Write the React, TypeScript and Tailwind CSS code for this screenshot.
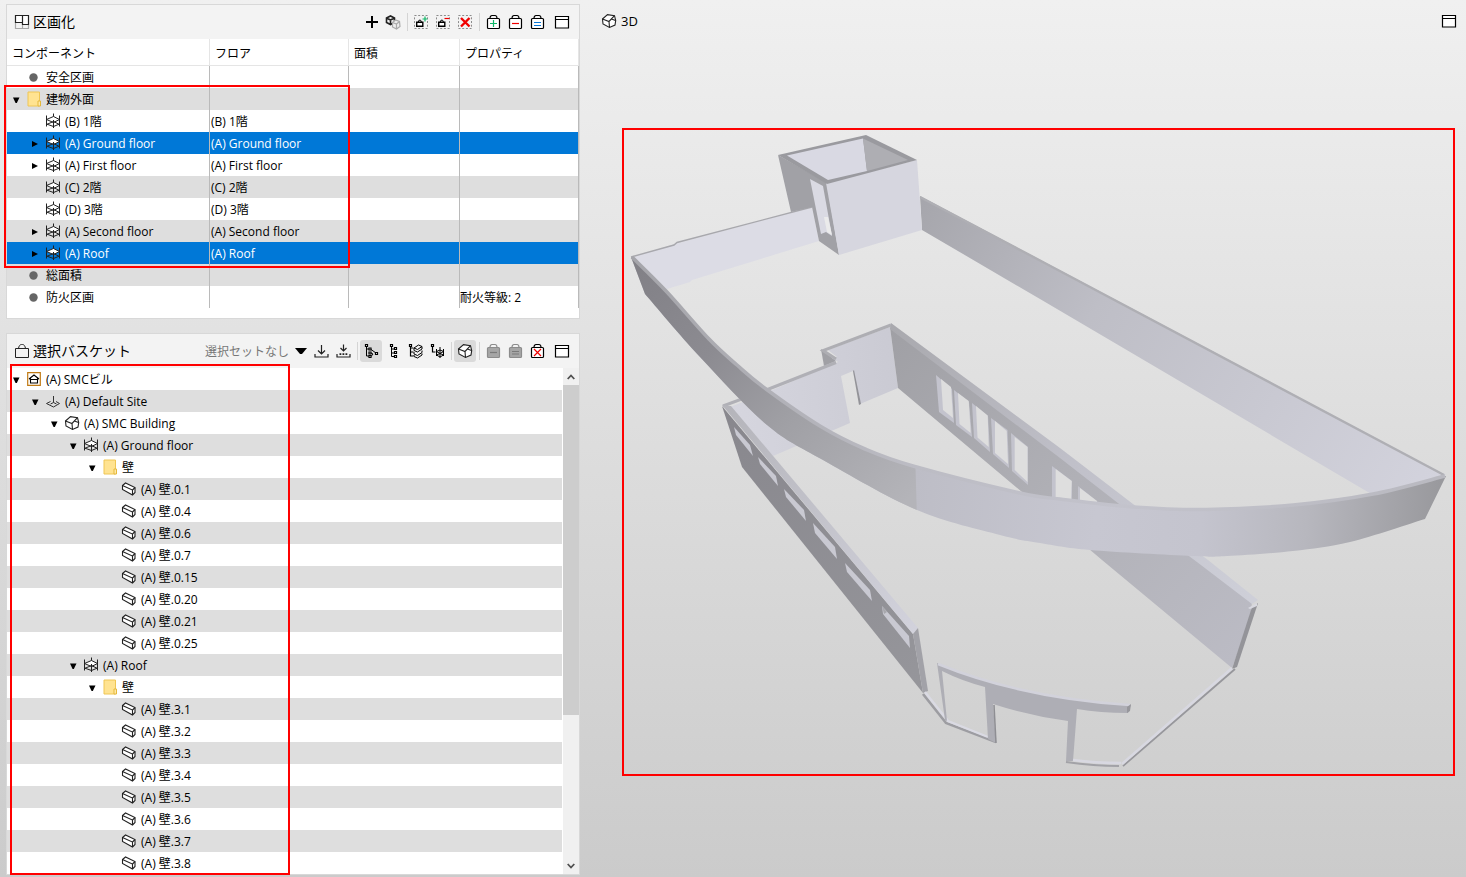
import type { ReactNode } from "react";

type Pt = [number, number];

/* ---------- icons ---------- */

function Icon({ children, stroke = "#000", width = 1.2 }: { children: ReactNode; stroke?: string; width?: number }) {
  return (
    <svg viewBox="0 0 16 16" className="h-4 w-4 shrink-0" fill="none" stroke={stroke} strokeWidth={width} aria-hidden="true">
      {children}
    </svg>
  );
}

const PartitionIcon = () => (
  <Icon>
    <path d="M1.5 8v6.5h6.5M8 14.5h6.5V10.5" stroke="#a8a8a8" />
    <path d="M8.5 8v6.5" stroke="#a8a8a8" />
    <path d="M1.5 1.5h7v7h-7zM8.5 1.5h6v9h-6z" fill="#fff" stroke="#222" />
  </Icon>
);
const PlusIcon = () => (
  <Icon>
    <path d="M9 2v12M3 8h12" strokeWidth="2" />
  </Icon>
);
const CubesIcon = () => (
  <Icon>
    <path d="M1.500 4l4-2 4 2v4.500l-4 2-4-2zM1.500 4l4 2 4-2M5.500 6v4.500" strokeWidth="1.6" stroke="#222" />
    <path d="M7.500 8.500l3-2.500 4 1.500.5 5-3.500 2.500-4-2z" fill="#eee" stroke="#aaa" />
    <path d="M7.500 8.500l4 1.500 3-2.500M11.500 10v5" stroke="#aaa" />
  </Icon>
);

function DashedIcon({ children }: { children: ReactNode }) {
  return (
    <Icon>
      <path d="M1.500 1.500h13v13h-13z" stroke="#8c8c8c" strokeDasharray="2 1.700" strokeWidth="1" />
      {children}
    </Icon>
  );
}
const MiniBag = () => (
  <>
    <path d="M3.700 8.200h6.100v4.100H3.700z" fill="#fff" strokeWidth="1.400" />
    <path d="M5.200 8l.8-1.800h1.600l.8 1.800" strokeWidth="1" />
  </>
);
const BasketAddIcon = () => (
  <DashedIcon>
    <MiniBag />
    <path d="M12 2.500v5M9.500 5h5" stroke="#10b768" />
  </DashedIcon>
);
const BasketSubIcon = () => (
  <DashedIcon>
    <MiniBag />
    <path d="M9.500 4.500h5" stroke="#f00000" strokeWidth="1.200" />
  </DashedIcon>
);
const BasketDelIcon = () => (
  <DashedIcon>
    <path d="M4 4l8.500 8.500M12.500 4L4 12.500" stroke="#f00000" strokeWidth="2.400" />
  </DashedIcon>
);

function Bag({ children, stroke = "#000", fill = "#fff" }: { children?: ReactNode; stroke?: string; fill?: string }) {
  return (
    <Icon stroke={stroke}>
      <rect x="2.500" y="4.500" width="12" height="10" rx="1" fill={fill} />
      <path d="M5 4.500c0-1.800.8-3 2-3h3c1.200 0 2 1.200 2 3" />
      {children}
    </Icon>
  );
}
const BagPlus = () => (
  <Bag>
    <path d="M8.500 6v7M5 9.500h7" stroke="#10b768" />
  </Bag>
);
const BagMinus = () => (
  <Bag>
    <path d="M5 9.500h7" stroke="#f00000" />
  </Bag>
);
const BagEquals = () => (
  <Bag>
    <path d="M5 8.500h7M5 11.500h7" stroke="#0a78d8" />
  </Bag>
);
const BagGray = () => (
  <Bag stroke="#8c8c8c" fill="#a6a6a6">
    <path d="M5 9.500h7" stroke="#7a7a7a" />
  </Bag>
);
const BagGrayEquals = () => (
  <Bag stroke="#8c8c8c" fill="#a6a6a6">
    <path d="M5 8.500h7M5 11h7" stroke="#7a7a7a" />
  </Bag>
);
const BagCross = () => (
  <Bag>
    <path d="M5 6l7 7M12 6l-7 7" stroke="#f00000" />
  </Bag>
);
const WindowIcon = () => (
  <Icon>
    <path d="M1.500 2.500h13v11.500h-13zM1.500 5.500h13" fill="#fff" />
  </Icon>
);
const OpenBagIcon = () => (
  <Icon stroke="#222" width={1}>
    <path d="M1.500 5.500h13v9h-13zM4.500 5.500c.3-2.500 1.500-4 3-4h1c1.500 0 2.700 1.500 3 4" />
  </Icon>
);
const StoreIcon = () => (
  <Icon stroke="#222">
    <path d="M8.500 2v9M5 7.500L8.500 11 12 7.500M2 11v3h13v-3" />
  </Icon>
);
const StoreAllIcon = () => (
  <Icon stroke="#222">
    <path d="M8.500 1.500v6M5.500 5l3 3 3-3M2 11v3h13v-3" />
    <path d="M4.500 11.200H13" strokeDasharray="1.800 1.200" strokeWidth="1.800" />
  </Icon>
);
const TreeAIcon = () => (
  <Icon width={1}>
    <path d="M3.500 3.500v9.500h2.500M3.500 6h2.500M8 6.500L13 10M8 10l2 1-2 2.500" />
    <path d="M2.500 1.500h2v2h-2zM6 5h2v2H6zM6 9h2v2H6zM6 12.500h2v2H6zM12.500 9.500h2v2h-2z" fill="#fff" strokeWidth="1.200" />
  </Icon>
);
const TreeBIcon = () => (
  <Icon width={1}>
    <path d="M6.500 3v10.500h2.500M6.500 6h2.500M6.500 10h2.500" />
    <path d="M5.500 1.500h2v2h-2zM9.500 4.500h2v2h-2zM9.500 8.500h2v2h-2zM9.500 12.500h2v2h-2z" fill="#fff" strokeWidth="1.200" />
  </Icon>
);
const TreeLayersIcon = () => (
  <Icon width={1}>
    <path d="M3.500 3v10h3M3.500 5h3M3.500 9h3M2.500 1.500h2v2h-2z" strokeWidth="1.200" />
    <path d="M7 5l4.500-3 3.500 1.500-4.500 3zM7 5v2.500L10.500 9 15 6V3.500M7 9v2l3.500 1.500L15 9.500V7.500M7 12v1.500l3.500 1.500L15 12v-1.500" />
  </Icon>
);
const TreeFloorIcon = () => (
  <Icon width={1}>
    <path d="M3.500 3v6h3M2.500 1.500h2v2h-2z" strokeWidth="1.200" />
    <path d="M7.500 6v7M14.500 6v7M11 4v11M7.500 8.500L11 7l3.500 1.500L11 10.500zM7.500 12L11 10.500l3.500 1.500L11 14z" />
  </Icon>
);
const BuildingIcon = () => (
  <Icon stroke="#222" width={1.1}>
    <path d="M1.500 6L6.500 1.700l7 1 1.200 4.800-.7 4.500-5.500 2.500-6.500-3.500z" fill="#fff" />
    <path d="M1.500 6l6.500 2.500 5.500-5.800M8 8.500l.5 6M10.500 6l4 1.500" />
  </Icon>
);
const FloorIcon = () => (
  <Icon stroke="#222" width={1}>
    <path d="M1.500 6.500L8.500 3.500l6 3-6 3z" fill="#fff" />
    <path d="M1.500 2.500v11M14.500 2.500v11M8.500.5v3M8.500 7v8M1.500 11.500l7-3 6 3M1.500 11l7 2.500 6-2.500" />
  </Icon>
);
const SiteIcon = () => (
  <Icon stroke="#333" width={1}>
    <path d="M5.500 8.500l-4 2 7 3.500 6-3.500-3.500-2M8.500 3v6.500M5.500 11l3-1.500 3 1.500" />
  </Icon>
);
const WallIcon = () => (
  <Icon stroke="#222" width={1.1}>
    <path d="M1.500 4.500L4.500 2l9.500 4.500v5L11.500 14 1.500 8.500z" fill="#fff" />
    <path d="M1.500 4.500l10 4.500v5M11.500 9L14 6.500" />
  </Icon>
);
const ProjectIcon = () => (
  <Icon>
    <path d="M1.700 1.700h12.600v12.600H1.700z" stroke="#c07a14" fill="#fff" strokeWidth="1.200" />
    <path d="M4.500 7.500v4.500h7v-4.500M3 8l5-4 5 4M4.500 8.500h7" strokeWidth="1.100" />
  </Icon>
);
const FolderIcon = () => (
  <Icon>
    <path d="M2 1h11.500v14H2z" fill="#ffe391" stroke="#efc654" strokeWidth="1" />
    <path d="M12 10h2.500v5H12z" fill="#ffe9a8" stroke="#e5b93c" strokeWidth="1" />
  </Icon>
);
const DotIcon = () => (
  <Icon>
    <circle cx="7.500" cy="8.500" r="4.200" fill="#666" stroke="none" />
  </Icon>
);

/* ---------- shared pieces ---------- */

function ToolButton({ label, active, className = "", children }: { label: string; active?: boolean; className?: string; children: ReactNode }) {
  return (
    <button
      type="button"
      aria-label={label}
      aria-pressed={active}
      className={`flex h-[22px] w-[22px] items-center justify-center rounded-[3px] ${active ? "bg-[#dadada]" : ""} ${className}`}
    >
      {children}
    </button>
  );
}

const Separator = () => <span className="mx-0.5 box-content h-[18px] w-px border-r border-[#d4d4d4]" />;

function Arrow({ open }: { open?: boolean }) {
  if (open === undefined) return <span className="w-[18px] shrink-0" />;
  return (
    <button type="button" aria-label={open ? "折りたたむ" : "展開"} className="flex h-[22px] w-[18px] shrink-0 items-center justify-center pt-px">
      <svg viewBox="0 0 8 8" className="h-2 w-2" aria-hidden="true">
        <path d={open ? "M1 1.500h6.500L4.800 7H3.600z" : "M1 1l6 3-6 3z"} fill="#000" />
      </svg>
    </button>
  );
}

const INDENT = ["pl-0", "pl-[19px]", "pl-[38px]", "pl-[57px]", "pl-[76px]", "pl-[95px]"];

function Label({ depth, open, icon, text }: { depth: number; open?: boolean; icon: ReactNode; text: string }) {
  return (
    <div className={`flex h-[22px] items-center ${INDENT[depth]}`}>
      <Arrow open={open} />
      <span className="flex w-[18px] shrink-0 justify-center">{icon}</span>
      <span className="pt-0.5 pl-[3px] whitespace-nowrap">{text}</span>
    </div>
  );
}

/* ---------- compartment table ---------- */

type Row = { depth: number; open?: boolean; kind: "dot" | "folder" | "floor"; text: string; prop?: string; selected?: boolean };

const ROWS: Row[] = [
  { depth: 0, kind: "dot", text: "安全区画" },
  { depth: 0, open: true, kind: "folder", text: "建物外面" },
  { depth: 1, kind: "floor", text: "(B) 1階" },
  { depth: 1, open: false, kind: "floor", text: "(A) Ground floor", selected: true },
  { depth: 1, open: false, kind: "floor", text: "(A) First floor" },
  { depth: 1, kind: "floor", text: "(C) 2階" },
  { depth: 1, kind: "floor", text: "(D) 3階" },
  { depth: 1, open: false, kind: "floor", text: "(A) Second floor" },
  { depth: 1, open: false, kind: "floor", text: "(A) Roof", selected: true },
  { depth: 0, kind: "dot", text: "総面積" },
  { depth: 0, kind: "dot", text: "防火区画", prop: "耐火等級: 2" },
];

const KIND_ICON = { dot: <DotIcon />, folder: <FolderIcon />, floor: <FloorIcon /> };

function Compartments() {
  return (
    <section className="relative border border-[#d8d8d8] bg-white pb-2.5">
      <header className="flex h-[34px] items-center bg-[#f3f3f3] pr-1.5 pl-[7px]">
        <PartitionIcon />
        <h2 className="flex-1 pl-[3px] text-sm">区画化</h2>
        <ToolButton label="新規区画"><PlusIcon /></ToolButton>
        <ToolButton label="区画を作成"><CubesIcon /></ToolButton>
        <Separator />
        <ToolButton label="選択に追加"><BasketAddIcon /></ToolButton>
        <ToolButton label="選択から除外"><BasketSubIcon /></ToolButton>
        <ToolButton label="削除"><BasketDelIcon /></ToolButton>
        <Separator />
        <ToolButton label="バスケットに追加"><BagPlus /></ToolButton>
        <ToolButton label="バスケットから除外"><BagMinus /></ToolButton>
        <ToolButton label="バスケットに設定"><BagEquals /></ToolButton>
        <ToolButton label="最大化" className="ml-[3px]"><WindowIcon /></ToolButton>
      </header>
      <table className="w-full table-fixed border-separate border-spacing-0">
        <colgroup>
          <col className="w-[203px]" />
          <col className="w-[139px]" />
          <col className="w-[111px]" />
          <col />
        </colgroup>
        <thead>
          <tr>
            {["コンポーネント", "フロア", "面積", "プロパティ"].map((h) => (
              <th key={h} scope="col" className="h-[27px] border-r border-b border-[#e5e5e5] pt-1 pb-0 pl-[5px] text-left font-normal">
                {h}
              </th>
            ))}
          </tr>
        </thead>
        <tbody>
          {ROWS.map((r, i) => (
            <tr key={r.text} className={r.selected ? "bg-[#0078d7] text-white" : i % 2 ? "bg-[#dedede]" : ""}>
              <td className="h-[22px] border-r border-[#bababa] p-0">
                <Label depth={r.depth} open={r.open} icon={KIND_ICON[r.kind]} text={r.text} />
              </td>
              <td className="border-r border-[#bababa] p-0 pt-0.5 pl-px">{r.kind === "floor" ? r.text : ""}</td>
              <td className="border-r border-[#bababa] p-0" />
              <td className="border-r border-[#bababa] p-0 pt-0.5">{r.prop}</td>
            </tr>
          ))}
        </tbody>
      </table>
      <div className="pointer-events-none absolute top-20 -left-[3px] h-[183px] w-[346px] border-2 border-[#f00]" />
    </section>
  );
}

/* ---------- selection basket ---------- */

type Node = { depth: number; open?: boolean; icon: ReactNode; text: string };

const walls = (ids: string[]): Node[] => ids.map((id) => ({ depth: 5, icon: <WallIcon />, text: `(A) 壁.${id}` }));

const NODES: Node[] = [
  { depth: 0, open: true, icon: <ProjectIcon />, text: "(A) SMCビル" },
  { depth: 1, open: true, icon: <SiteIcon />, text: "(A) Default Site" },
  { depth: 2, open: true, icon: <BuildingIcon />, text: "(A) SMC Building" },
  { depth: 3, open: true, icon: <FloorIcon />, text: "(A) Ground floor" },
  { depth: 4, open: true, icon: <FolderIcon />, text: "壁" },
  ...walls(["0.1", "0.4", "0.6", "0.7", "0.15", "0.20", "0.21", "0.25"]),
  { depth: 3, open: true, icon: <FloorIcon />, text: "(A) Roof" },
  { depth: 4, open: true, icon: <FolderIcon />, text: "壁" },
  ...walls(["3.1", "3.2", "3.3", "3.4", "3.5", "3.6", "3.7", "3.8"]),
];

function ScrollArrow({ up }: { up?: boolean }) {
  return (
    <button type="button" aria-label={up ? "上へ" : "下へ"} className="flex h-[17px] items-center justify-center">
      <svg viewBox="0 0 8 6" className="h-1.5 w-2" fill="none" stroke="#505050" strokeWidth="1.800" aria-hidden="true">
        <path d={up ? "M.7 5L4 1.500 7.300 5" : "M.7 1L4 4.500 7.300 1"} />
      </svg>
    </button>
  );
}

function Basket() {
  return (
    <section className="relative border border-[#d8d8d8] bg-white">
      <header className="flex h-[34px] items-center bg-[#f3f3f3] pr-1.5 pl-[7px]">
        <OpenBagIcon />
        <h2 className="flex-1 pl-[3px] text-sm">選択バスケット</h2>
        <label className="flex items-center text-[#777]">
          <select aria-label="選択セット" className="w-[90px] appearance-none bg-transparent pt-0.5 outline-none">
            <option>選択セットなし</option>
          </select>
          <svg viewBox="0 0 12 7" className="mr-[3px] h-[7px] w-3" aria-hidden="true">
            <path d="M0 0h12L7 6H5z" fill="#000" />
          </svg>
        </label>
        <ToolButton label="保存"><StoreIcon /></ToolButton>
        <ToolButton label="すべて保存"><StoreAllIcon /></ToolButton>
        <Separator />
        <ToolButton label="階層表示" active><TreeAIcon /></ToolButton>
        <ToolButton label="種類表示"><TreeBIcon /></ToolButton>
        <ToolButton label="レイヤー表示"><TreeLayersIcon /></ToolButton>
        <ToolButton label="フロア表示"><TreeFloorIcon /></ToolButton>
        <Separator />
        <ToolButton label="3Dに表示" active><BuildingIcon /></ToolButton>
        <Separator />
        <ToolButton label="選択を除外"><BagGray /></ToolButton>
        <ToolButton label="選択を設定"><BagGrayEquals /></ToolButton>
        <ToolButton label="クリア"><BagCross /></ToolButton>
        <ToolButton label="最大化" className="ml-[3px]"><WindowIcon /></ToolButton>
      </header>
      <div className="flex">
        <ul className="flex-1">
          {NODES.map((n, i) => (
            <li key={i} className={i % 2 ? "bg-[#dedede]" : ""}>
              <Label {...n} />
            </li>
          ))}
        </ul>
        <div className="ml-px flex w-4 flex-col bg-[#f0f0f0]">
          <ScrollArrow up />
          <div className="flex flex-1 flex-col">
            <div className="basis-[70%] bg-[#cdcdcd]" />
          </div>
          <ScrollArrow />
        </div>
      </div>
      <div className="pointer-events-none absolute top-[30px] left-[3px] h-[511px] w-[280px] border-2 border-[#f00]" />
    </section>
  );
}

/* ---------- 3D model ---------- */

/* Cubic spline through the points, without the leading move command. */
function spline(p: Pt[]): string {
  let d = "";
  for (let i = 0; i < p.length - 1; i++) {
    const a = p[i - 1] ?? p[i];
    const b = p[i];
    const c = p[i + 1];
    const e = p[i + 2] ?? c;
    d += `C${b[0] + (c[0] - a[0]) / 6} ${b[1] + (c[1] - a[1]) / 6} ${c[0] - (e[0] - b[0]) / 6} ${c[1] - (e[1] - b[1]) / 6} ${c[0]} ${c[1]}`;
  }
  return d;
}

const BAND_TOP: Pt[] = [[632, 257], [666, 291], [709, 339], [737, 365], [766, 389], [820, 426], [865, 449], [913, 466], [1020, 493], [1060, 499], [1133, 507], [1207, 509.5], [1293, 505], [1373, 494], [1445, 476]];
const BAND_BOTTOM: Pt[] = [[1425, 519], [1350, 542], [1293, 551], [1227, 556], [1193, 556], [1090, 550], [1040, 543], [1000, 535], [917, 510], [823, 460], [767, 425], [700, 357], [645, 294]];

const BAND = `M631 257${spline(BAND_TOP)}L1446 476L1425 519${spline(BAND_BOTTOM)}Z`;
const BAND_CAP = `M632 257${spline(BAND_TOP)}`;

const REAR_WINDOWS = [
  ["936,375 952,389 954,423 939,412", "941,379 951,387 953,418 943,410"],
  ["954,390 969,402 972,437 956,425", "958,393 968.7,401 970.7,433 959.5,424"],
  ["972,403 988,416 990,452 974,438", "976,406 987.7,415.5 988.7,447 977.5,437.5"],
  ["991,418 1007.5,430 1009,468 993,454", "995,421 1006.7,431 1008,464 995,453"],
  ["1011,433 1028,447 1028,485 1012,471", "1014.7,437 1027.5,447 1027.5,482 1014.7,470"],
  ["1052,466 1072,481 1072,502 1052,500", "1055.7,469 1071.7,481 1071,502 1055.7,500"],
  ["1078,486 1098,502 1098,506 1078,503", "1080,488 1097,501 1097,505 1080,503"],
];

const SIDE_WINDOWS = [
  "734,427 750,445 753,456 736,435",
  "758,457 776,476 778,486 760,464",
  "784,489 804,510 806,521 786,497",
  "813,523 835,547 837,559 815,533",
  "845,563 870,590 872,601 847,572",
  "882,606 909,636 910,648 883,614",
];

function Model() {
  return (
    <svg viewBox="624 130 829 644" className="block h-auto w-full" role="img" aria-label="3D">
      <defs>
        <linearGradient id="bandLeft" gradientUnits="userSpaceOnUse" x1="631" y1="280" x2="890" y2="520">
          <stop offset="0" stopColor="#828187" />
          <stop offset=".3" stopColor="#8c8b91" />
          <stop offset=".6" stopColor="#a0a0a5" />
          <stop offset="1" stopColor="#b4b4b9" />
        </linearGradient>
        <linearGradient id="band" gradientUnits="userSpaceOnUse" x1="915" y1="470" x2="1440" y2="510">
          <stop offset="0" stopColor="#bdbdc6" />
          <stop offset=".35" stopColor="#c7c7d1" />
          <stop offset=".55" stopColor="#c4c4ce" />
          <stop offset=".75" stopColor="#b7b7be" />
          <stop offset="1" stopColor="#99999d" />
        </linearGradient>
        <linearGradient id="cap" gradientUnits="userSpaceOnUse" x1="631" y1="0" x2="1446" y2="0">
          <stop offset="0" stopColor="#a5a5aa" />
          <stop offset=".35" stopColor="#bcbcc4" />
          <stop offset=".6" stopColor="#c3c3cc" />
          <stop offset="1" stopColor="#b9b9c0" />
        </linearGradient>
        <linearGradient id="right" gradientUnits="userSpaceOnUse" x1="920" y1="200" x2="1438" y2="480">
          <stop offset="0" stopColor="#a6a6ac" />
          <stop offset=".35" stopColor="#bebec6" />
          <stop offset="1" stopColor="#d3d3dd" />
        </linearGradient>
        <linearGradient id="rear" gradientUnits="userSpaceOnUse" x1="890" y1="330" x2="1250" y2="640">
          <stop offset="0" stopColor="#a0a0a5" />
          <stop offset=".5" stopColor="#b0b0b6" />
          <stop offset="1" stopColor="#bbbbc4" />
        </linearGradient>
        <linearGradient id="rearCap" gradientUnits="userSpaceOnUse" x1="890" y1="330" x2="1250" y2="600">
          <stop offset="0" stopColor="#a9a9ae" />
          <stop offset=".5" stopColor="#c0c0c9" />
          <stop offset="1" stopColor="#cecfd8" />
        </linearGradient>
        <linearGradient id="side" gradientUnits="userSpaceOnUse" x1="722" y1="406" x2="923" y2="693">
          <stop offset="0" stopColor="#88878d" />
          <stop offset="1" stopColor="#96969b" />
        </linearGradient>
        <linearGradient id="sideCap" gradientUnits="userSpaceOnUse" x1="722" y1="406" x2="918" y2="630">
          <stop offset="0" stopColor="#b4b4ba" />
          <stop offset="1" stopColor="#d2d2dc" />
        </linearGradient>
        <linearGradient id="light" gradientUnits="userSpaceOnUse" x1="730" y1="0" x2="900" y2="0">
          <stop offset="0" stopColor="#d6d6df" />
          <stop offset="1" stopColor="#cacad3" />
        </linearGradient>
      </defs>

      {/* ground floor, rear walls */}
      <polygon points="821,349 836,361 824,366" fill="#a0a0a5" />
      <polygon points="828,350 890,327 898,388 860,404 853,371 841,376 850,423 773,456 730,407 770,391 838,362 832,358 837,357" fill="url(#light)" />
      <polygon points="853,371 854,370 861,404 859,405" fill="#939398" />
      <path d="M723 406L770 388.500 836 362.500" stroke="#b0b0b6" strokeWidth="3" fill="none" />
      <path d="M836 359L823 350.500 891 325" stroke="#aeaeb3" strokeWidth="3" fill="none" />
      <polygon points="890,327 1060,456 1123,505 1197,560 1252,602 1250,620 1232,668 1102,560 1022,492 898,388" fill="url(#rear)" />
      <polygon points="891,323 1060,448 1133,504 1208,560 1258,600 1252,604 1197,562 1123,507 1060,458 890,329" fill="url(#rearCap)" />
      <polygon points="1252,607 1258,603 1237,667 1232,669" fill="#949499" />
      <polygon points="1248,608 1257,603 1257,606 1250,609" fill="#d8d8e0" />
      {REAR_WINDOWS.map(([reveal, hole]) => (
        <g key={hole}>
          <polygon points={reveal} fill="#c3c3cd" />
          <polygon points={hole} fill="#dedede" />
        </g>
      ))}

      {/* ground floor, long side wall */}
      <polygon points="722,406 913,634 923,693 742,467" fill="url(#side)" />
      <polygon points="722,405 731,406 918,628 913,634" fill="url(#sideCap)" />
      <polygon points="918,628 928,691 923,693 913,634" fill="#a2a2a8" />
      {SIDE_WINDOWS.map((w) => (
        <polygon key={w} points={w} fill="#c9c9d2" />
      ))}
      <polygon points="882,606 887,612 884,614" fill="#a8a8ad" />

      {/* ground floor, entrance front */}
      <path d="M923 694L946 723 996 742" stroke="#9d9da2" strokeWidth="2.600" fill="none" />
      <path d="M925 692L948 721 988 737" stroke="#dadae3" strokeWidth="2.400" fill="none" />
      <path
        fillRule="evenodd"
        fill="#aeaeb5"
        d="M937 663Q1020 699 1131 705L1128 713Q1100 713 1077 709L1073 761 1066 761 1068 721Q1030 716 993 704L996 743 988 739 985 687Q962 681 942 671L947 721 945 720Z"
      />
      <path d="M938 664Q1022 698 1130 705" stroke="#d2d2db" strokeWidth="2.600" fill="none" />
      <path d="M994 705L996 743" stroke="#8e8e93" strokeWidth="1.500" />
      <path d="M1066 762Q1094 766 1119 766" stroke="#a2a2a7" strokeWidth="2" fill="none" />
      <path d="M1073 760Q1095 763 1121 763" stroke="#d8d8e1" strokeWidth="2.600" fill="none" />
      <polygon points="1127,707 1131,704 1130,711 1127,713" fill="#97979c" />
      <path d="M1123 766L1235 669" stroke="#97979c" strokeWidth="1.800" />
      <path d="M1122 764L1232 668" stroke="#d8d8e1" strokeWidth="2.600" />

      {/* roof, rear parapets */}
      <polygon points="633,257 675,244 812,207 819,241 692,280 690,282 667,289" fill="#dcdce5" />
      <path d="M631 257L674 245 677 242.500 812 207" stroke="#a8a8ad" strokeWidth="1.400" fill="none" />
      <polygon points="920,196 1446,475 1373,495 1040,299 922,230" fill="url(#right)" />
      <path d="M920 197L1040 260.500 1444 475" stroke="#afafb4" strokeWidth="2.400" fill="none" />

      {/* roof, stair tower */}
      <polygon points="778,155 827,183 839,255 819,241 812,207 791,212" fill="#a1a1a6" />
      <polygon points="810,179 823,186 832,236 826,232 821,234" fill="#dadae3" />
      <polygon points="824,217 828,217 832,235 827,232" fill="#ebebeb" />
      <polygon points="826,183 917,160 922,230 839,255" fill="#d6d6df" />
      <polygon points="778,155 866,135 917,160 827,184" fill="#9a9a9f" />
      <polygon points="787,155.500 863,138.500 867,171 828,180" fill="#d9d9e3" />
      <polygon points="863,138.500 908,160 867,171" fill="#aeaeb3" />

      {/* roof, curved parapet */}
      <clipPath id="leftPart">
        <path d="M624 240H909L917 520H624z" />
      </clipPath>
      <path d={BAND} fill="url(#band)" />
      <path d={BAND} fill="url(#bandLeft)" clipPath="url(#leftPart)" />
      <path d={BAND_CAP} stroke="url(#cap)" strokeWidth="3.600" fill="none" strokeLinejoin="round" />
    </svg>
  );
}

export default function App() {
  return (
    <div className="flex min-h-screen bg-linear-to-b from-[#f0f0f0] to-[#cbcbcb] pl-1.5 font-['Open_Sans','Noto_Sans_CJK_JP',sans-serif] text-xs text-black">
      <div className="flex w-[574px] shrink-0 flex-col gap-3.5 pt-1 pb-0.5">
        <Compartments />
        <Basket />
      </div>
      <main className="min-w-0 flex-1 pt-2.5 pl-[21px]">
        <header className="flex h-[22px] items-center pr-1.5">
          <BuildingIcon />
          <h2 className="flex-1 pt-0.5 pl-1 text-[13px]">3D</h2>
          <ToolButton label="最大化"><WindowIcon /></ToolButton>
        </header>
        <div className="mt-24 mr-[11px] ml-[21px] border-2 border-[#f00]">
          <Model />
        </div>
      </main>
    </div>
  );
}
